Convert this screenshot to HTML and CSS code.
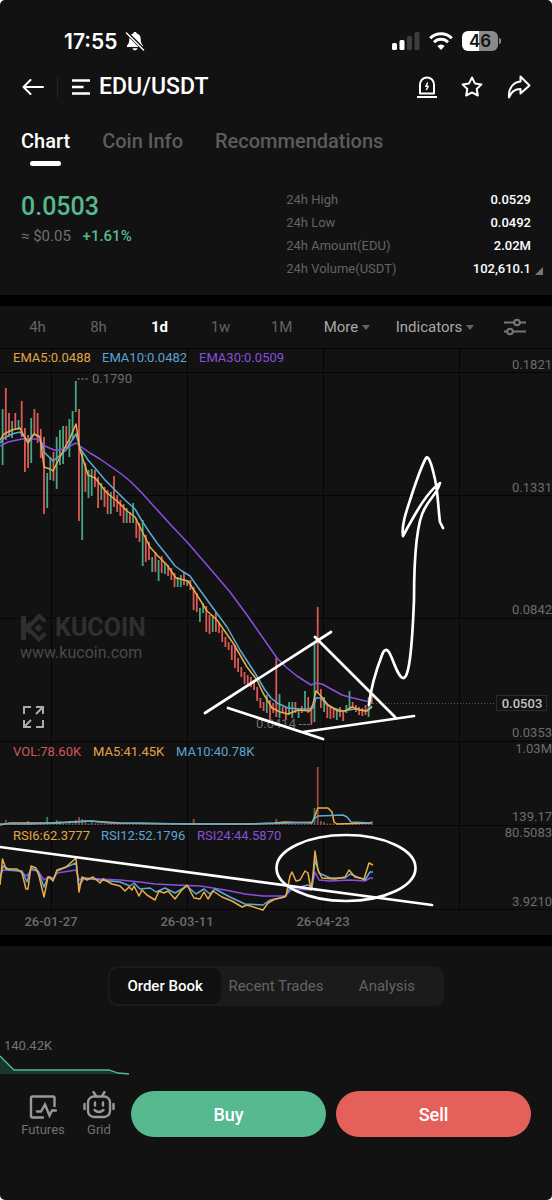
FILE: index.html
```html
<!DOCTYPE html>
<html lang="en">
<head>
  <meta charset="utf-8">
  <title>EDU/USDT</title>
  <meta name="viewport" content="width=device-width, initial-scale=1.0">
  <link rel="stylesheet" href="styles.css">
</head>
<body>
<div class="app">
  <div class="status-bar">
    <span class="time">17:55</span>
    <svg class="bell" width="20" height="20" viewBox="0 0 20 20">
      <path d="M10 1c-1 0-1.700.6-1.800 1.500C5.600 3.200 4.300 5.200 4.300 8c0 3.500-.8 5-2.300 6.500V16h16v-1.500C16.500 13 15.700 11.500 15.700 8c0-2.800-1.300-4.800-3.900-5.500C11.700 1.600 11 1 10 1z" fill="#fff"/>
      <path d="M7.500 17.200h5c-.3 1.400-1.300 2.100-2.500 2.100s-2.200-.7-2.500-2.100z" fill="#fff"/>
      <path d="M1.500 1.500L18.500 18.500" stroke="#121212" stroke-width="3.500"/>
      <path d="M1.500 2L18.500 19" stroke="#fff" stroke-width="1.500" stroke-linecap="round"/>
    </svg>
    <svg class="signal" width="28" height="18" viewBox="0 0 28 18">
      <rect x="0" y="11" width="5" height="7" rx="1.500" fill="#fff"/>
      <rect x="7.500" y="8" width="5" height="10" rx="1.500" fill="#fff"/>
      <rect x="15" y="4" width="5" height="14" rx="1.500" fill="#3d3d3d"/>
      <rect x="22.500" y="0" width="5" height="18" rx="1.500" fill="#3d3d3d"/>
    </svg>
    <svg class="wifi" width="24" height="18" viewBox="0 0 24 18" fill="none" stroke="#fff" stroke-width="3">
      <path d="M1.200 6.200a15.300 15.300 0 0 1 21.600 0"/>
      <path d="M5 10.200a9.900 9.900 0 0 1 14 0"/>
      <path d="M12 18l-3.700-4a5.300 5.300 0 0 1 7.400 0z" fill="#fff" stroke="none"/>
    </svg>
    <span class="battery">46</span>
  </div>

  <header class="header">
    <button class="icon-btn back" aria-label="Back">
      <svg width="22" height="16" viewBox="0 0 22 16"><path d="M21 8H1.500M8.500 1L1.500 8l7 7"/></svg>
    </button>
    <button class="pair">
      <svg width="18" height="16" viewBox="0 0 18 16"><path d="M0 1.500h18M0 8h11.500M0 14.500h18"/></svg>
      <span>EDU/USDT</span>
    </button>
    <button class="icon-btn" aria-label="Price alert">
      <svg width="20" height="22" viewBox="0 0 20 22"><path d="M3 17.500V8.500a7 7 0 0 1 14 0v9zM0 21h20"/><path d="M10.500 7L8.800 10.300h2.400L9.500 13.500" stroke-width="1.500"/></svg>
    </button>
    <button class="icon-btn" aria-label="Favorite">
      <svg width="22" height="22" viewBox="0 0 22 22"><path d="M11 1.500l2.900 5.900 6.500 1-4.700 4.600 1.100 6.500-5.800-3.100-5.800 3.100 1.100-6.500L1.600 8.400l6.500-1z"/></svg>
    </button>
    <button class="icon-btn" aria-label="Share">
      <svg width="24" height="24" viewBox="0 0 24 24"><path d="M13.500 1.500L22.500 10.500 13.500 18.500V14C8 14 4 17 2 22.500 1 14 6 7 13.500 6.500z"/></svg>
    </button>
  </header>

  <nav class="tabs">
    <a href="#" class="active">Chart</a>
    <a href="#">Coin Info</a>
    <a href="#">Recommendations</a>
  </nav>

  <section class="ticker">
    <div class="price-box">
      <div class="price">0.0503</div>
      <div class="change">≈ $0.05 <span>+1.61%</span></div>
    </div>
    <dl class="stats">
      <dt>24h High</dt><dd>0.0529</dd>
      <dt>24h Low</dt><dd>0.0492</dd>
      <dt>24h Amount(EDU)</dt><dd>2.02M</dd>
      <dt>24h Volume(USDT)</dt><dd class="more-info">102,610.1</dd>
    </dl>
  </section>

  <div class="intervals">
    <button>4h</button>
    <button>8h</button>
    <button class="active">1d</button>
    <button>1w</button>
    <button>1M</button>
    <button class="drop">More</button>
    <button class="drop wide">Indicators</button>
    <button class="settings" aria-label="Chart settings">
      <svg width="22" height="18" viewBox="0 0 22 18"><path d="M0 4.500h10M16 4.500h6M0 13.500h3M9 13.500h13"/><circle cx="13" cy="4.500" r="2.800"/><circle cx="6" cy="13.500" r="2.800"/></svg>
    </button>
  </div>

  <!-- price, volume and RSI panes share one coordinate system -->
  <svg class="chart" viewBox="0 348 552 587">
    <path class="grid" d="M0 348.500H552M0 372.500H552M0 495.500H552M0 618.500H552M0 741.500H552M0 825.500H552M0 909.500H552M51.500 348V911M187.500 348V911M323.500 348V911M459.500 348V911"/>

    <g class="watermark">
      <path d="M21 616h5v8.500l3-2.500 3 3-2.500 3 2.500 3-3 3-3-2.500v8.500h-5z"/>
      <path class="logo-arm" d="M45.500 621.500L39 616 27.500 628 39 639.500l6.500-6"/>
      <path d="M38.500 624l4 4-4 4-4-4z"/>
      <text class="brand" x="55" y="636">KUCOIN</text>
      <text class="site" x="20" y="658">www.kucoin.com</text>
    </g>

    <g id="candles"></g>

    <g class="lines">
      <polyline class="purple" points="0,446 8,442 22,439 38,439 45,446 54,450 60,450 70,446 76,443 80,446 90,453 100,459 110,466 120,473 130,481 142,493 150,502 160,513 170,524 187,542 200,557 213,572 230,592 247,615 263,638 277,658 287,668 297,676 311,685 316,683 322,684 333,690 342,695 353,698 370,702"/>
      <polyline class="blue" points="0,443 4,438 12,434 20,432 28,441 34,434 40,437 44,452 53,461 58,457 66,450 76,434 80,448 88,460 95,468 105,480 115,490 125,500 135,509 142,521 150,533 157,543 166,554 175,566 182,571 190,576 197,586 205,597 213,608 227,627 240,650 255,673 265,690 271,698 277,703 288,708 300,709 308,709 313,708 316,698 321,698 326,704 333,708 343,711 355,709 366,711 372,706"/>
      <polyline class="yellow" points="0,440 4,434 12,430 20,428 24,436 28,443 34,434 40,437 44,467 50,469 53,471 62,453 70,438 76,424 80,450 88,475 95,478 107,493 117,501 127,511 135,517 143,533 150,547 157,555 167,565 176,578 188,581 197,595 207,611 217,620 233,643 247,667 257,680 263,693 272,708 280,712 288,714 298,710 310,711 313,704 316,691 321,696 328,705 338,711 345,711 352,707 360,710 367,711 372,707"/>
    </g>

    <g id="volume"></g>
    <g class="lines">
      <polyline class="yellow" points="0,825 10,823 50,823 70,822 90,821 120,823 190,824 250,824 274,823 285,822 312,823 318,808 328,808 332,812 334,822 337,824 372,823"/>
      <polyline class="blue" points="0,824 30,824 60,823 90,821 110,823 190,824 250,824 290,823 312,822 315,818 318,816 343,815 347,817 351,822 372,823"/>
      <polyline class="purple" points="0,876 3,870 20,871 27,876 31,870 38,871 44,880 48,877 54,878 57,873 76,870 79,880 84,878 100,879 120,880 140,882 155,884 175,885 200,886 213,888 225,890 245,894 263,896 285,896 292,889 311,890 315,872 319,880 330,881 350,880 365,881 370,878 373,878"/>
      <polyline class="blue" points="0,880 3,866 10,870 22,871 27,882 31,868 38,871 44,887 48,877 53,880 57,871 76,863 79,886 84,878 100,880 120,882 130,886 134,883 140,889 150,888 156,892 165,888 175,893 187,886 196,894 204,889 210,894 215,889 230,897 245,904 263,905 270,900 276,899 285,897 290,888 300,887 308,885 312,888 315,860 319,873 330,878 345,878 350,874 365,880 370,872 373,872"/>
      <polyline class="yellow" points="0,885 2.500,859 6,869 17,869 22,873 26,889 28,889 31,866 36,868 39,876 44,897 48,877 50,877 53,881 57,870 66,867 76,858 79,892 82,877 87,880 93,877 100,883 103,879 112,884 120,886 125,891 129,887 132,890 134,886 139,896 142,890 147,895 155,900 159,891 164,893 168,891 175,899 181,891 187,885 194,898 200,899 204,892 208,899 213,891 222,897 232,901 242,907 247,905 263,910 268,903 275,899 280,898 286,896 290,876 292,872 296,881 300,880 305,871 308,873 311,890 313,875 315,851 318,870 322,878 335,879 345,877 349,870 355,877 364,879 369,863 373,865"/>
    </g>

    <path class="dots" d="M373 703.500H496"/>
    <path class="dash" d="M77 379H89M299 724.500H312"/>

    <g class="labels">
      <text x="92" y="383">0.1790</text>
      <text x="256" y="728">0.0414</text>
      <text class="end" x="552" y="369">0.1821</text>
      <text class="end" x="552" y="492">0.1331</text>
      <text class="end" x="552" y="614">0.0842</text>
      <text class="end" x="552" y="737">0.0353</text>
      <text class="end" x="552" y="753">1.03M</text>
      <text class="end" x="552" y="821">139.17</text>
      <text class="end" x="552" y="837">80.5083</text>
      <text class="end" x="552" y="906">3.9210</text>
      <text class="date" x="51" y="926">26-01-27</text>
      <text class="date" x="187" y="926">26-03-11</text>
      <text class="date" x="323" y="926">26-04-23</text>
    </g>
    <rect class="last-box" x="496.500" y="695.500" width="50" height="15"/>
    <text class="last" x="522" y="708">0.0503</text>

    <g class="legend">
      <text class="t-yellow" x="13" y="362">EMA5:0.0488</text>
      <text class="t-blue" x="102" y="362">EMA10:0.0482</text>
      <text class="t-purple" x="199" y="362">EMA30:0.0509</text>
      <text class="t-red" x="13" y="756">VOL:78.60K</text>
      <text class="t-yellow" x="93" y="756">MA5:41.45K</text>
      <text class="t-blue" x="176" y="756">MA10:40.78K</text>
      <text class="t-yellow" x="13" y="840">RSI6:62.3777</text>
      <text class="t-blue" x="101" y="840">RSI12:52.1796</text>
      <text class="t-purple" x="197" y="840">RSI24:44.5870</text>
    </g>

    <path class="expand" d="M24 714v-7h7M36 707h7v7M43 707l-7 7M24 720v7h7M24 727l7-7M43 720v7h-7"/>

    <!-- hand drawn marks -->
    <g class="marks">
      <path d="M205 713L331 632M315 637L395 717M228 708L323 739M303 732L414 716"/>
      <path d="M369 705C371 686 377 668 382 655C384 649 387 648 390 654C394 662 398 677 403 678C409 679 412 650 414 600C414 560 416 522 425 508C430 498 437 494 440 483C427 492 416 512 403 536C401 524 408 507 412 494C416 482 422 465 426 458C428 455 431 462 434 475C438 489 438 508 440 522L443 528"/>
      <path d="M0 847L432 905"/>
      <ellipse cx="346" cy="868" rx="69.500" ry="33"/>
    </g>
  </svg>

  <section class="book">
    <div class="segment">
      <button class="active">Order Book</button>
      <button>Recent Trades</button>
      <button>Analysis</button>
    </div>
    <div class="depth">
      <span>140.42K</span>
      <svg width="130" height="20" viewBox="0 0 130 20">
        <path d="M0 1L14 15H109L118 18 129 19H0z" fill="#16372b"/>
        <path d="M0 1L14 15H109L118 18 129 19" fill="none" stroke="#56b990" stroke-width="1.300"/>
      </svg>
    </div>
  </section>

  <footer class="actions">
    <a href="#" class="shortcut">
      <svg width="28" height="24" viewBox="0 0 28 24"><path d="M14 22.500H3.500a1.500 1.500 0 0 1-1.500-1.500V3a1.500 1.500 0 0 1 1.500-1.500H24A1.500 1.500 0 0 1 25.500 3v8M8 16.500h4l4-7 4.500 11 2.500-5h4"/></svg>
      Futures
    </a>
    <a href="#" class="shortcut">
      <svg width="32" height="28" viewBox="0 0 32 28"><rect x="5" y="5.500" width="22" height="20.500" rx="6"/><path d="M10.500 1l2.500 4M21.500 1L19 5M1.500 13v5M30.500 13v5M12 11.500v3M20 11.500v3M11.500 19q4.500 4 9 0"/></svg>
      Grid
    </a>
    <button class="buy">Buy</button>
    <button class="sell">Sell</button>
  </footer>
</div>
<script src="script.js"></script>
</body>
</html>
```

FILE: styles.css
```css
* {
  box-sizing: border-box;
}

html {
  background: #fff;
}

body {
  margin: 0;
  font-family: Roboto, "Liberation Sans", sans-serif;
  font-size: 15px;
  color: #fff;
}

.app {
  min-height: 100vh;
  background: #121212;
  border-radius: 5px;
  overflow: hidden;
}

button {
  background: none;
  border: none;
  padding: 0;
  margin: 0;
  color: #636363;
  font-family: inherit;
  font-size: 15px;
  cursor: pointer;
}

a {
  color: #636363;
  text-decoration: none;
}

svg {
  display: block;
}

/* status bar */
.status-bar {
  display: flex;
  align-items: center;
  height: 64px;
  padding: 18px 54px 0 64px;
}

.time {
  font-family: Inter, sans-serif;
  font-size: 21px;
  font-weight: 600;
}

.bell {
  margin-left: 8px;
}

.signal {
  margin-left: auto;
}

.wifi {
  margin: 0 9px;
}

.battery {
  position: relative;
  width: 36px;
  height: 20px;
  border-radius: 6px;
  background: linear-gradient(to right, #fff 48%, #8a8a8a 48%);
  color: #121212;
  font-family: Inter, sans-serif;
  font-size: 17px;
  font-weight: 600;
  line-height: 20px;
  text-align: center;
}

.battery::after {
  content: "";
  position: absolute;
  left: 37px;
  top: 7px;
  width: 2px;
  height: 6px;
  border-radius: 0 2px 2px 0;
  background: #8a8a8a;
}

/* header */
.header {
  display: flex;
  align-items: center;
  gap: 24px;
  height: 44px;
  padding: 1px 21px 0 22px;
}

.header svg {
  fill: none;
  stroke: #fff;
  stroke-width: 2;
  stroke-linecap: round;
  stroke-linejoin: round;
}

.pair {
  display: flex;
  align-items: center;
  gap: 9px;
  margin: 0 auto 0 -11px;
  padding-left: 14px;
  border-left: 1px solid #242424;
  color: #fff;
  font-size: 23px;
  font-weight: 500;
  line-height: 22px;
}

.header .pair svg {
  stroke-width: 2.4;
  stroke-linecap: butt;
}

/* tabs */
.tabs {
  display: flex;
  gap: 32px;
  height: 58px;
  padding: 18px 21px 0;
  font-size: 20px;
  font-weight: 500;
  line-height: 30px;
}

.tabs a {
  color: #5c5c5c;
}

.tabs .active {
  color: #fff;
}

.tabs .active::after {
  content: "";
  display: block;
  width: 31px;
  height: 5px;
  margin: 5px auto 0;
  border-radius: 3px;
  background: #fff;
}

/* ticker */
.ticker {
  display: flex;
  justify-content: space-between;
  padding: 22px 21px 15px;
  border-bottom: 11px solid #000;
}

.price {
  margin-top: 2px;
  color: #56b990;
  font-size: 25px;
  font-weight: 500;
  line-height: 34px;
}

.change {
  color: #6e6e6e;
  line-height: 24px;
}

.change span {
  margin-left: 8px;
  color: #56b990;
  font-weight: 500;
}

.stats {
  display: grid;
  grid-template-columns: 1fr auto;
  width: 48%;
  margin: 0;
  font-size: 13px;
  line-height: 23px;
}

.stats dt {
  color: #636363;
}

.stats dd {
  margin: 0;
  text-align: right;
  font-weight: 500;
}

.more-info {
  position: relative;
}

.more-info::after {
  content: "";
  position: absolute;
  right: -12px;
  bottom: 5px;
  border-left: 8px solid transparent;
  border-bottom: 8px solid #777;
}

/* intervals */
.intervals {
  display: flex;
  height: 42px;
  padding: 0 10px 0 7px;
}

.intervals button {
  flex: 61;
}

.intervals .active {
  color: #fff;
  font-weight: 700;
}

.intervals .drop {
  flex: 70;
  color: #a8a8a8;
}

.intervals .wide {
  flex: 106;
}

.drop::after {
  content: "";
  display: inline-block;
  margin-left: 4px;
  vertical-align: 2px;
  border: 4px solid transparent;
  border-top: 5px solid #636363;
  border-bottom: none;
}

.intervals .settings {
  flex: 54;
  display: flex;
  align-items: center;
  justify-content: center;
}

.settings svg {
  fill: none;
  stroke: #777;
  stroke-width: 2;
}

/* chart */
.chart {
  width: 100%;
  height: auto;
}

.grid {
  stroke: #050505;
  fill: none;
}

.watermark {
  fill: #2e2f30;
}

.logo-arm {
  fill: none;
  stroke: #2e2f30;
  stroke-width: 4;
}

.brand {
  font-size: 25px;
  font-weight: 700;
}

.site {
  font-size: 16px;
  fill: #4a4a4a;
}

.candle-up {
  stroke: #45a683;
  stroke-width: 1.8;
}

.candle-down {
  stroke: #dc5a55;
  stroke-width: 1.8;
}

#volume {
  opacity: 0.7;
}

.lines {
  fill: none;
  stroke-width: 1.5;
  stroke-linejoin: round;
}

.yellow { stroke: #eeac48; }
.blue { stroke: #5cacd8; }
.purple { stroke: #8d4ee4; }

.dots {
  stroke: #555;
  stroke-dasharray: 1 2;
}

.dash {
  stroke: #777;
  stroke-dasharray: 3 1;
}

.labels {
  fill: #6c6c6c;
  font-size: 13px;
}

.end {
  text-anchor: end;
}

.date {
  text-anchor: middle;
  font-weight: 500;
}

.last-box {
  fill: #121212;
  stroke: #2b2b2b;
}

.last {
  fill: #c4c4c4;
  font-size: 13px;
  font-weight: 500;
  text-anchor: middle;
}

.legend {
  font-size: 13px;
}

.t-yellow { fill: #e2a547; }
.t-blue { fill: #5ba4d2; }
.t-purple { fill: #8850d8; }
.t-red { fill: #d4565b; }

.expand {
  fill: none;
  stroke: #aaa;
  stroke-width: 2;
}

.marks {
  fill: none;
  stroke: #fff;
  stroke-width: 2.7;
  stroke-linecap: round;
  stroke-linejoin: round;
}

/* order book */
.book {
  border-top: 11px solid #000;
  padding-top: 20px;
}

.segment {
  display: grid;
  grid-template-columns: repeat(3, 1fr);
  width: 61%;
  height: 40px;
  margin: 0 auto;
  padding: 2px;
  border-radius: 9px;
  background: #1b1b1b;
}

.segment .active {
  border-radius: 8px;
  background: #101010;
  color: #fff;
  font-weight: 500;
}

.depth {
  margin-top: 30px;
  font-size: 13px;
  line-height: 19px;
  color: #747474;
}

.depth span {
  padding-left: 4px;
}

/* bottom actions */
.actions {
  display: flex;
  padding: 16px 21px 0 15px;
}

.shortcut {
  display: flex;
  flex-direction: column;
  align-items: center;
  justify-content: flex-end;
  width: 56px;
  color: #707070;
  font-size: 13px;
  line-height: 16px;
}

.shortcut svg {
  margin-bottom: 3px;
  fill: none;
  stroke: #999;
  stroke-width: 2.4;
  stroke-linecap: round;
}

.actions button {
  flex: 1;
  height: 46px;
  margin-left: 4px;
  border-radius: 23px;
  color: #fff;
  font-size: 18px;
  font-weight: 500;
}

.actions .buy {
  background: #56b990;
}

.actions .sell {
  margin-left: 10px;
  background: #e4605b;
}
```

FILE: script.js
```js
// direction, high, low (in chart units)
const candles = `
g409-465 r388-440 r413-437 g421-438 r413-430 g420-430 r401-437 r428-472 r435-468 g418-463
r409-435 r413-443 r429-458 r437-514 g473-508 g457-480 r452-481 g437-489 g430-465 g426-464
r426-447 g419-457 g411-440 g381-412 r409-521 g453-540 r463-492 g470-498 g469-496 r470-487
r477-508 g483-500 r487-507 r490-514 g492-514 r476-507 r495-512 r500-516 r504-523 g508-523
r512-523 g503-523 r518-538 r523-542 g520-566 r535-562 r542-560 g557-572 r552-572 g560-581
r556-573 g563-574 r565-576 r568-580 r573-587 g577-587 g575-587 r573-585 g580-586 r580-590
r587-610 r593-612 g608-622 g603-613 r606-632 r615-634 g615-632 r612-632 r623-633 r630-642
r637-647 r642-650 r645-660 r645-668 r658-672 r667-677 r672-684 r675-684 r677-687 r680-690
r687-701 r698-708 r702-711 g695-713 r700-719 r703-713 r658-717 g694-718 r707-713 r708-720
g702-715 g702-718 r702-713 g710-718 r706-713 g691-710 r697-713 r708-724 g643-722 r607-693
r689-708 g697-712 r705-718 r707-719 r708-718 g710-720 r707-717 r712-721 g705-713 g691-710
r702-708 r705-712 r707-715 r708-716 r705-715 g697-717 r695-704`.trim().split(/\s+/);

// bars taller than the usual one
const volumes = { 1: 5, 8: 4, 14: 8, 17: 5, 18: 4, 21: 4, 23: 5, 24: 8, 25: 6, 26: 5, 28: 4, 44: 3, 60: 6, 86: 6, 98: 17, 99: 58, 100: 4, 101: 3, 116: 4 };

const step = 3.183;
const base = 825;

function line(x, y1, y2, up) {
  return `<line class="${up ? 'candle-up' : 'candle-down'}" x1="${x}" x2="${x}" y1="${y1}" y2="${y2}"/>`;
}

let bars = '';
let vols = '';
candles.forEach((c, i) => {
  const x = (2.6 + i * step).toFixed(1);
  const up = c[0] === 'g';
  const [high, low] = c.slice(1).split('-');
  bars += line(x, high, low, up);
  vols += line(x, base - (volumes[i] || 1.5), base, up);
});

document.getElementById('candles').innerHTML = bars;
document.getElementById('volume').innerHTML = vols;
```
